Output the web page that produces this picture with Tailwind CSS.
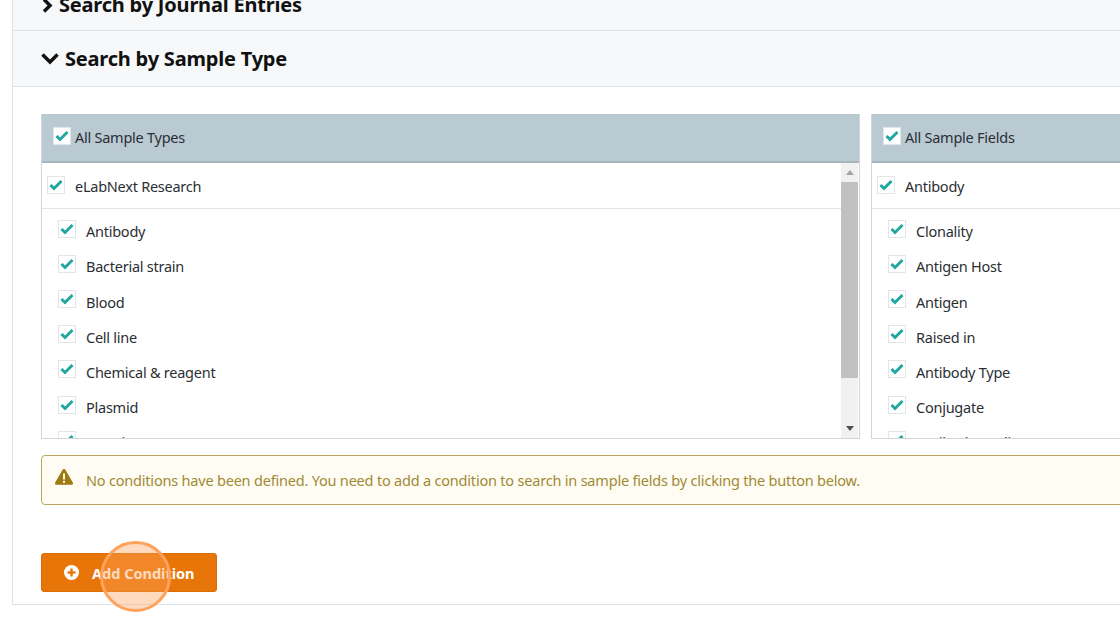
<!DOCTYPE html>
<html lang="en">
<head>
<meta charset="UTF-8">
<title>Search</title>
<script src="https://cdn.jsdelivr.net/npm/@tailwindcss/browser@4"></script>
</head>
<body class="bg-white font-['Noto_Sans',sans-serif] text-[#212529]">
<div class="w-[1120px] h-[626px] overflow-hidden relative pl-3">
  <div class="w-[1200px] h-[605px] border-l border-b border-[#dfe2e4] flex flex-col">
    <!-- collapsed section -->
    <div class="h-[31px] shrink-0 bg-[#f7f8f9] border-b border-[#dfe2e4] flex items-end pl-[29px] pb-[13px]">
      <div class="flex items-center gap-[6px] h-[24px] text-[#111]">
        <svg class="w-[11px] h-[15px] shrink-0" viewBox="0 0 11 15" fill="none" stroke="currentColor" stroke-width="3.500"><path d="M2 1.500 8 7.500 2 13.500"/></svg>
        <span class="text-[20px] leading-[24px] font-bold tracking-[-0.2px]">Search by Journal Entries</span>
      </div>
    </div>
    <!-- open section -->
    <div class="h-[56px] shrink-0 bg-[#f7f8f9] border-b border-[#dfe2e4] flex items-center pl-[28px] gap-[6px] text-[#111]">
      <svg class="w-[18px] h-[13px] shrink-0" viewBox="0 0 18 13" fill="none" stroke="currentColor" stroke-width="3.500"><path d="M1.500 2.500 9 10 16.500 2.500"/></svg>
      <span class="text-[20px] leading-[26px] font-bold tracking-[-0.2px]">Search by Sample Type</span>
    </div>
    <div class="flex-1 pl-[28px] pt-[27px]">
      <div class="flex gap-[11px] h-[325px] text-[14.5px] tracking-[-0.25px] text-[#2b2f33]">
        <!-- sample types -->
        <div class="w-[819px] shrink-0 border border-[#d3d6d8] border-t-0 flex flex-col">
          <div class="h-[49px] shrink-0 bg-[#b9cad3] border-b-[2px] border-[#a6b4bc] flex items-center pl-[11px]">
            <span class="w-[18px] h-[18px] bg-white border border-[#e3e6e8] flex items-center justify-center -mt-[4px]">
              <svg class="w-[14px] h-[12px]" viewBox="0 0 14 12" fill="none" stroke="#1fa7a0" stroke-width="3"><path d="M1.500 6 5 9.500 12.500 2"/></svg>
            </span>
            <span class="ml-[4px]">All Sample Types</span>
          </div>
          <div class="flex-1 flex min-h-0">
            <div class="flex-1 overflow-hidden">
              <div class="h-[46px] border-b border-[#e1e3e5] flex items-center pl-[5px]">
                <span class="w-[18px] h-[18px] bg-white border border-[#e3e6e8] flex items-center justify-center -mt-[2px]">
                  <svg class="w-[14px] h-[12px]" viewBox="0 0 14 12" fill="none" stroke="#1fa7a0" stroke-width="3"><path d="M1.500 6 5 9.500 12.500 2"/></svg>
                </span>
                <span class="ml-[10px] pt-[3px]">eLabNext Research</span>
              </div>
              <div class="pl-[16px] pt-[4px]">
                <div class="h-[35.2px] flex items-center"><span class="w-[18px] h-[18px] border border-[#e3e6e8] flex items-center justify-center -mt-[4px]"><svg class="w-[14px] h-[12px]" viewBox="0 0 14 12" fill="none" stroke="#1fa7a0" stroke-width="3"><path d="M1.500 6 5 9.500 12.500 2"/></svg></span><span class="ml-[10px] pt-[3px]">Antibody</span></div>
                <div class="h-[35.2px] flex items-center"><span class="w-[18px] h-[18px] border border-[#e3e6e8] flex items-center justify-center -mt-[4px]"><svg class="w-[14px] h-[12px]" viewBox="0 0 14 12" fill="none" stroke="#1fa7a0" stroke-width="3"><path d="M1.500 6 5 9.500 12.500 2"/></svg></span><span class="ml-[10px] pt-[3px]">Bacterial strain</span></div>
                <div class="h-[35.2px] flex items-center"><span class="w-[18px] h-[18px] border border-[#e3e6e8] flex items-center justify-center -mt-[4px]"><svg class="w-[14px] h-[12px]" viewBox="0 0 14 12" fill="none" stroke="#1fa7a0" stroke-width="3"><path d="M1.500 6 5 9.500 12.500 2"/></svg></span><span class="ml-[10px] pt-[3px]">Blood</span></div>
                <div class="h-[35.2px] flex items-center"><span class="w-[18px] h-[18px] border border-[#e3e6e8] flex items-center justify-center -mt-[4px]"><svg class="w-[14px] h-[12px]" viewBox="0 0 14 12" fill="none" stroke="#1fa7a0" stroke-width="3"><path d="M1.500 6 5 9.500 12.500 2"/></svg></span><span class="ml-[10px] pt-[3px]">Cell line</span></div>
                <div class="h-[35.2px] flex items-center"><span class="w-[18px] h-[18px] border border-[#e3e6e8] flex items-center justify-center -mt-[4px]"><svg class="w-[14px] h-[12px]" viewBox="0 0 14 12" fill="none" stroke="#1fa7a0" stroke-width="3"><path d="M1.500 6 5 9.500 12.500 2"/></svg></span><span class="ml-[10px] pt-[3px]">Chemical &amp; reagent</span></div>
                <div class="h-[35.2px] flex items-center"><span class="w-[18px] h-[18px] border border-[#e3e6e8] flex items-center justify-center -mt-[4px]"><svg class="w-[14px] h-[12px]" viewBox="0 0 14 12" fill="none" stroke="#1fa7a0" stroke-width="3"><path d="M1.500 6 5 9.500 12.500 2"/></svg></span><span class="ml-[10px] pt-[3px]">Plasmid</span></div>
                <div class="h-[35.2px] flex items-center"><span class="w-[18px] h-[18px] border border-[#e3e6e8] flex items-center justify-center -mt-[4px]"><svg class="w-[14px] h-[12px]" viewBox="0 0 14 12" fill="none" stroke="#1fa7a0" stroke-width="3"><path d="M1.500 6 5 9.500 12.500 2"/></svg></span><span class="ml-[10px] pt-[3px]">Protein</span></div>
              </div>
            </div>
            <!-- scrollbar -->
            <div class="w-[17px] shrink-0 bg-[#f1f1f1] flex flex-col items-center mr-px">
              <div class="h-[19px] shrink-0 flex items-center justify-center"><div class="w-0 h-0 border-x-[4px] border-x-transparent border-b-[5px] border-b-[#a3a3a3]"></div></div>
              <div class="w-full h-[196px] bg-[#c1c1c1]"></div>
              <div class="flex-1"></div>
              <div class="h-[19px] shrink-0 flex items-center justify-center"><div class="w-0 h-0 border-x-[4px] border-x-transparent border-t-[5px] border-t-[#505050]"></div></div>
            </div>
          </div>
        </div>
        <!-- sample fields -->
        <div class="w-[400px] shrink-0 border border-[#d3d6d8] border-t-0 flex flex-col">
          <div class="h-[49px] shrink-0 bg-[#b9cad3] border-b-[2px] border-[#a6b4bc] flex items-center pl-[11px]">
            <span class="w-[18px] h-[18px] bg-white border border-[#e3e6e8] flex items-center justify-center -mt-[4px]">
              <svg class="w-[14px] h-[12px]" viewBox="0 0 14 12" fill="none" stroke="#1fa7a0" stroke-width="3"><path d="M1.500 6 5 9.500 12.500 2"/></svg>
            </span>
            <span class="ml-[4px]">All Sample Fields</span>
          </div>
          <div class="flex-1 overflow-hidden">
            <div class="h-[46px] border-b border-[#e1e3e5] flex items-center pl-[5px]">
              <span class="w-[18px] h-[18px] bg-white border border-[#e3e6e8] flex items-center justify-center -mt-[2px]">
                <svg class="w-[14px] h-[12px]" viewBox="0 0 14 12" fill="none" stroke="#1fa7a0" stroke-width="3"><path d="M1.500 6 5 9.500 12.500 2"/></svg>
              </span>
              <span class="ml-[10px] pt-[3px]">Antibody</span>
            </div>
            <div class="pl-[16px] pt-[4px]">
              <div class="h-[35.2px] flex items-center"><span class="w-[18px] h-[18px] border border-[#e3e6e8] flex items-center justify-center -mt-[4px]"><svg class="w-[14px] h-[12px]" viewBox="0 0 14 12" fill="none" stroke="#1fa7a0" stroke-width="3"><path d="M1.500 6 5 9.500 12.500 2"/></svg></span><span class="ml-[10px] pt-[3px]">Clonality</span></div>
              <div class="h-[35.2px] flex items-center"><span class="w-[18px] h-[18px] border border-[#e3e6e8] flex items-center justify-center -mt-[4px]"><svg class="w-[14px] h-[12px]" viewBox="0 0 14 12" fill="none" stroke="#1fa7a0" stroke-width="3"><path d="M1.500 6 5 9.500 12.500 2"/></svg></span><span class="ml-[10px] pt-[3px]">Antigen Host</span></div>
              <div class="h-[35.2px] flex items-center"><span class="w-[18px] h-[18px] border border-[#e3e6e8] flex items-center justify-center -mt-[4px]"><svg class="w-[14px] h-[12px]" viewBox="0 0 14 12" fill="none" stroke="#1fa7a0" stroke-width="3"><path d="M1.500 6 5 9.500 12.500 2"/></svg></span><span class="ml-[10px] pt-[3px]">Antigen</span></div>
              <div class="h-[35.2px] flex items-center"><span class="w-[18px] h-[18px] border border-[#e3e6e8] flex items-center justify-center -mt-[4px]"><svg class="w-[14px] h-[12px]" viewBox="0 0 14 12" fill="none" stroke="#1fa7a0" stroke-width="3"><path d="M1.500 6 5 9.500 12.500 2"/></svg></span><span class="ml-[10px] pt-[3px]">Raised in</span></div>
              <div class="h-[35.2px] flex items-center"><span class="w-[18px] h-[18px] border border-[#e3e6e8] flex items-center justify-center -mt-[4px]"><svg class="w-[14px] h-[12px]" viewBox="0 0 14 12" fill="none" stroke="#1fa7a0" stroke-width="3"><path d="M1.500 6 5 9.500 12.500 2"/></svg></span><span class="ml-[10px] pt-[3px]">Antibody Type</span></div>
              <div class="h-[35.2px] flex items-center"><span class="w-[18px] h-[18px] border border-[#e3e6e8] flex items-center justify-center -mt-[4px]"><svg class="w-[14px] h-[12px]" viewBox="0 0 14 12" fill="none" stroke="#1fa7a0" stroke-width="3"><path d="M1.500 6 5 9.500 12.500 2"/></svg></span><span class="ml-[10px] pt-[3px]">Conjugate</span></div>
              <div class="h-[35.2px] flex items-center"><span class="w-[18px] h-[18px] border border-[#e3e6e8] flex items-center justify-center -mt-[4px]"><svg class="w-[14px] h-[12px]" viewBox="0 0 14 12" fill="none" stroke="#1fa7a0" stroke-width="3"><path d="M1.500 6 5 9.500 12.500 2"/></svg></span><span class="ml-[10px] pt-[3px]">Antibody quality</span></div>
            </div>
          </div>
        </div>
      </div>
      <!-- warning -->
      <div class="mt-[16px] w-[1160px] h-[50px] bg-[#fffcf3] border border-[#b9a561] rounded-[4px] flex items-center pl-[13px] text-[14.5px] tracking-[-0.2px] text-[#a08a35]">
        <svg class="w-[18px] h-[16px] -mt-[6px] shrink-0" viewBox="0 0 18 16"><path fill="#9c7a10" d="M9 0c.6 0 1.100.3 1.400.8l7.400 12.700c.6 1-.1 2.300-1.400 2.300H1.600C.3 15.800-.4 14.500.2 13.500L7.600.8C7.900.3 8.400 0 9 0z"/><rect x="8" y="4.500" width="2" height="6" fill="#fffcf3"/><rect x="8" y="11.800" width="2" height="2" fill="#fffcf3"/></svg>
        <span class="ml-[13px] pt-[2px]">No conditions have been defined. You need to add a condition to search in sample fields by clicking the button below.</span>
      </div>
      <!-- button -->
      <button class="mt-[48px] w-[176px] h-[39px] bg-[#e87508] border border-[#d96d06] rounded-[3px] flex items-center pl-[22px] text-white text-[14.5px] font-bold">
        <svg class="w-[15px] h-[15px] shrink-0 -mt-[1px]" viewBox="0 0 15 15"><circle cx="7.500" cy="7.500" r="7.500" fill="#fff"/><rect x="3.500" y="6.300" width="8" height="2.400" fill="#e87508"/><rect x="6.300" y="3.500" width="2.400" height="8" fill="#e87508"/></svg>
        <span class="ml-[13px] pt-[2px]">Add Condition</span>
      </button>
    </div>
  </div>
  <!-- click marker -->
  <div class="absolute left-[100px] top-[541px] w-[71px] h-[71px] rounded-full bg-[#ffa25c]/40 border-[3px] border-[#ffa25c]"></div>
</div>
</body>
</html>
